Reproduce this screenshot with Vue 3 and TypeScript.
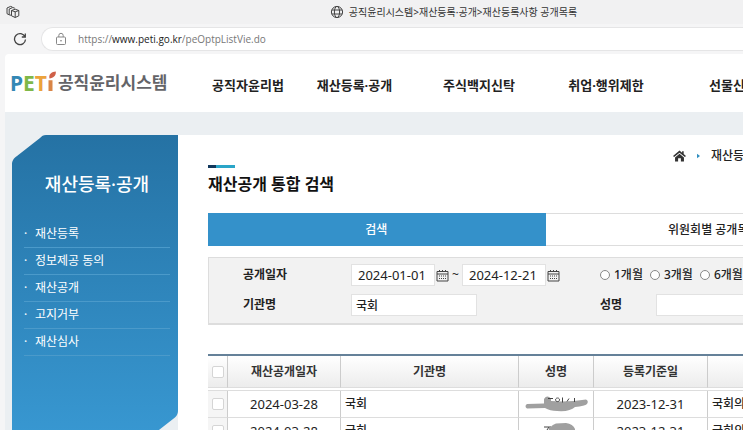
<script setup lang="ts">
import { ref } from 'vue'

interface Row {
  opened: string
  org: string
  base: string
  note: string
}

const navItems: string[] = ['공직자윤리법', '재산등록·공개', '주식백지신탁', '취업·행위제한', '선물신고']
const sideItems: string[] = ['재산등록', '정보제공 동의', '재산공개', '고지거부', '재산심사']
const periods: string[] = ['1개월', '3개월', '6개월']
const rows: Row[] = [
  { opened: '2024-03-28', org: '국회', base: '2023-12-31', note: '국회의원' },
  { opened: '2024-03-28', org: '국회', base: '2023-12-31', note: '국회의원' },
]

const from = ref('2024-01-01')
const to = ref('2024-12-21')
const org = ref('국회')
const person = ref('')
const period = ref('')
</script>

<template>
  <div class="browser">
    <div class="titlebar">
      <svg class="workspaces" viewBox="0 0 14 14" aria-hidden="true">
        <path d="M5.500 5.500 9.200 4.200l3.600 1.300v5.300l-3.600 1.700-3.700-1.700zM5.500 5.500l3.700 1.300 3.600-1.300M9.200 6.800v5.700M3.200 9.800V4l3.600-1.500 2 .7M1 8.700V3l3.600-1.600 1.700.6M1 8.700l2.200 1.100 2 .5" />
      </svg>
      <div class="tab-title">
        <svg class="globe" viewBox="0 0 14 14" aria-hidden="true">
          <circle cx="7" cy="7" r="5.600" />
          <ellipse cx="7" cy="7" rx="2.600" ry="5.600" />
          <path d="M1.900 5h10.200M1.900 9h10.200" />
        </svg>
        <span>공직윤리시스템&gt;재산등록·공개&gt;재산등록사항 공개목록</span>
      </div>
    </div>

    <div class="toolbar">
      <button class="reload" type="button" aria-label="새로 고침">
        <svg viewBox="0 0 14 14"><path d="M12 4.800A5.500 5.500 0 1 0 12.500 7.500M12.300 1.500v3.500H8.800" /></svg>
      </button>
      <div class="address">
        <svg class="lock" viewBox="0 0 12 14" aria-hidden="true">
          <rect x="1.500" y="5" width="9" height="7.500" rx="1" />
          <path d="M3.800 5V3.500a2.200 2.200 0 0 1 4.400 0V5" />
          <circle class="dot" cx="6" cy="8.800" r=".8" />
        </svg>
        <span class="url">https://<b>www.peti.go.kr</b>/peOptpListVie.do</span>
      </div>
    </div>

    <div class="page">
      <header class="site-header">
        <a class="logo" href="#" aria-label="PETI 공직윤리시스템">
          <span class="mark"><span class="p">P</span><span class="e">E</span><span class="t">T</span><svg class="i" viewBox="0 0 9 20" aria-hidden="true"><path d="M1.500 9.300h4V20h-4z" /><path class="leaf" d="M2.500 7.600C1.500 3.500 4 .8 8.800.4 9.300 4.500 6.500 7 2.500 7.600z" /></svg></span>
          <span class="logo-name">공직윤리시스템</span>
        </a>
        <nav class="gnb">
          <a v-for="item in navItems" :key="item" href="#">{{ item }}</a>
        </nav>
      </header>

      <div class="body">
        <aside class="side">
          <svg class="corner top" viewBox="0 0 34 30" aria-hidden="true"><path d="M0 0h34C31 0 30 1 28 3L5 21C1 24 0 26 0 30z" /></svg>
          <h2>재산등록·공개</h2>
          <ul>
            <li v-for="item in sideItems" :key="item"><a href="#">{{ item }}</a></li>
          </ul>
          <svg class="corner bottom" viewBox="0 0 34 30" aria-hidden="true"><path d="M34 30H0c3 0 4-1 6-3L29 9c4-3 5-5 5-9z" /></svg>
        </aside>

        <main class="content">
          <div class="heading">
            <h1>재산공개 통합 검색</h1>
            <div class="crumbs">
              <a href="#" aria-label="홈">
                <svg class="home" viewBox="0 0 14 12"><path d="M7 0 0 6l1.200 1.200L7 2.500l5.800 4.700L14 6l-2.500-2.100V.8H9.800v1.600zM7 3.600 2.200 7.500V12H5.500V8.500h3V12h3.300V7.500z" /></svg>
              </a>
              <svg class="arrow" viewBox="0 0 4 6" aria-hidden="true"><path d="M0 0l4 3-4 3z" /></svg>
              <a href="#">재산등록·공개</a>
            </div>
          </div>

          <div class="tabs">
            <button class="active" type="button">검색</button>
            <button type="button">위원회별 공개목록</button>
          </div>

          <form class="search" @submit.prevent>
            <div class="line">
              <label class="name" for="from">공개일자</label>
              <div class="fields">
                <input id="from" v-model="from" class="date" type="text" />
                <button class="cal" type="button" aria-label="시작일 선택">
                  <svg viewBox="0 0 13 13"><path d="M1 2.500h11v9.500H1zM1 5h11M3.500 1v2M6.500 1v2M9.500 1v2" /><path class="days" d="M3 7h7M3 9.500h7" /></svg>
                </button>
                <span class="tilde">~</span>
                <input id="to" v-model="to" class="date" type="text" aria-label="종료일" />
                <button class="cal" type="button" aria-label="종료일 선택">
                  <svg viewBox="0 0 13 13"><path d="M1 2.500h11v9.500H1zM1 5h11M3.500 1v2M6.500 1v2M9.500 1v2" /><path class="days" d="M3 7h7M3 9.500h7" /></svg>
                </button>
              </div>
              <div class="periods">
                <label v-for="p in periods" :key="p"><input v-model="period" type="radio" name="period" :value="p" />{{ p }}</label>
              </div>
            </div>
            <div class="line">
              <label class="name" for="org">기관명</label>
              <div class="fields"><input id="org" v-model="org" class="org" type="text" /></div>
              <div class="person">
                <label for="person">성명</label>
                <input id="person" v-model="person" type="text" />
              </div>
            </div>
          </form>

          <table class="grid">
            <colgroup>
              <col class="c-check" /><col class="c-date" /><col class="c-org" /><col class="c-name" /><col class="c-base" /><col />
            </colgroup>
            <thead>
              <tr>
                <th><input type="checkbox" aria-label="전체 선택" /></th>
                <th>재산공개일자</th>
                <th>기관명</th>
                <th>성명</th>
                <th>등록기준일</th>
                <th></th>
              </tr>
            </thead>
            <tbody>
              <tr class="spacer"><td colspan="6"></td></tr>
              <tr v-for="(row, i) in rows" :key="i">
                <td class="check"><input type="checkbox" aria-label="행 선택" /></td>
                <td class="num">{{ row.opened }}</td>
                <td class="text">{{ row.org }}</td>
                <td class="masked">
                  <svg v-if="i === 0" viewBox="0 0 64 18" aria-hidden="true">
                    <path class="smudge" d="M3 9Q0 11 3 13.500l18-.5q5 3 12 3 13 1 18-4 10-1 12-3 2-3-1-4.500L50 6l-12 .5L27 6V3.500q-4-4-7 .5v4.500z" />
                    <path class="trace" d="M24 3.500h5M33.500 3a2 1.800 0 1 0 .1 0M38.500 2.500v5M45 3.500l-2 3M50.500 3v4" />
                  </svg>
                  <svg v-else viewBox="0 0 64 18" aria-hidden="true">
                    <path class="trace" d="M20 5h5l-4 6M26 4v5" />
                    <path class="smudge" d="M24 9q3-6 8-7.500L42 1q7 1 9 6v11H24z" />
                  </svg>
                </td>
                <td class="num">{{ row.base }}</td>
                <td class="text">{{ row.note }}</td>
              </tr>
            </tbody>
          </table>
        </main>
      </div>
    </div>
  </div>
</template>

<style>
body {
  margin: 0;
  overflow: hidden;
}
</style>

<style scoped>
* {
  box-sizing: border-box;
}

.browser {
  height: 100vh;
  overflow: hidden;
  background: #f5f5f6;
  color: #222;
  font: 12px/18px "Noto Sans", "Noto Sans CJK KR", sans-serif;
}

a {
  color: inherit;
  text-decoration: none;
}

button,
input {
  margin: 0;
  padding: 0;
  font: inherit;
  color: inherit;
}

button {
  border: 0;
  background: none;
}

svg {
  display: block;
  fill: none;
  stroke: #444;
}

.titlebar {
  display: flex;
  align-items: center;
  height: 24px;
  padding-left: 6px;
  background: #f1f1f2;
}

.workspaces {
  width: 14px;
  height: 14px;
}

.tab-title {
  flex: 1;
  display: flex;
  align-items: center;
  justify-content: center;
  gap: 5px;
  padding-left: 144px;
  font-size: 10px;
  color: #333;
  white-space: nowrap;
}

.globe {
  width: 14px;
  height: 14px;
}

.toolbar {
  display: flex;
  align-items: center;
  gap: 14px;
  height: 30px;
  padding-left: 13px;
}

.reload svg {
  width: 14px;
  height: 14px;
  stroke-width: 1.3;
}

.address {
  flex: 1;
  display: flex;
  align-items: center;
  gap: 11px;
  height: 24px;
  padding-left: 13px;
  border: 1px solid #e5e5e6;
  border-right: 0;
  border-radius: 12px 0 0 12px;
  background: #fff;
}

.lock {
  width: 12px;
  height: 14px;
  stroke: #888;
}

.lock .dot {
  fill: #777;
  stroke: none;
}

.url {
  font-family: "Open Sans", sans-serif;
  font-size: 10px;
  color: #777;
}

.url b {
  font-weight: 500;
  color: #222;
}

.page {
  margin-left: 5px;
  border-radius: 4px 0 0 0;
  background: #fff;
  overflow: hidden;
}

.site-header {
  display: flex;
  align-items: center;
  height: 58px;
}

.logo {
  flex: none;
  display: flex;
  align-items: center;
  gap: 2px;
  width: 199px;
  padding-left: 5px;
}

.mark {
  display: flex;
  align-items: flex-start;
  font: bold 21px/24px "Noto Sans", sans-serif;
}

.p { color: #3488b5; }
.e { color: #7fb848; }
.t { color: #eca33c; }

.i {
  width: 9px;
  height: 20px;
  fill: #d98546;
  stroke: none;
}

.leaf {
  fill: #cf6048;
}

.logo-name {
  font-size: 17px;
  font-weight: 700;
  line-height: 24px;
  color: #646468;
  white-space: nowrap;
}

.gnb {
  flex: none;
  display: grid;
  grid-template-columns: 88px 125px 124px 130px 124px;
  padding-top: 4px;
  font-size: 13px;
  font-weight: 700;
  line-height: 20px;
  text-align: center;
  white-space: nowrap;
}

.body {
  display: flex;
  align-items: flex-start;
  padding: 23px 0 0 7px;
  background: linear-gradient(#ebeff2, #ebeff2) 0 0 / 100% 23px no-repeat,
    linear-gradient(#ebeff2, #ebeff2) 0 0 / 173px 100% no-repeat;
}

.side {
  position: relative;
  flex: none;
  width: 166px;
  padding: 36px 8px 84px 12px;
  background: linear-gradient(#2572a4, #3898d2);
  color: #fff;
}

.corner {
  position: absolute;
  width: 34px;
  height: 30px;
  fill: #ebeff2;
  stroke: none;
}

.corner.top {
  top: 0;
  left: 0;
}

.corner.bottom {
  right: 0;
  bottom: 0;
}

.side h2 {
  margin: 0 0 24px;
  font-size: 18px;
  font-weight: 500;
  line-height: 26px;
  text-align: center;
}

.side ul {
  margin: 0;
  padding: 0;
  list-style: none;
}

.side li {
  height: 27px;
  border-bottom: 1px solid #4b9aca;
  line-height: 26px;
}

.side li::before {
  content: "·";
  display: inline-block;
  width: 11px;
}

.content {
  flex: 1 0 675px;
  padding: 12px 0 0 30px;
}

.content > * {
  min-width: 675px;
}

.heading {
  display: grid;
  grid-template-columns: 1fr 210px;
  align-items: start;
  height: 66px;
}

.heading h1 {
  margin: 18px 0 0;
  font-size: 16px;
  font-weight: 700;
  line-height: 24px;
  color: #111;
}

.heading h1::before {
  content: "";
  display: block;
  width: 27px;
  height: 3px;
  margin-bottom: 4px;
  background: linear-gradient(90deg, #12385c 8px, #2aa5c8 8px);
}

.crumbs {
  display: flex;
  align-items: center;
  gap: 11px;
  font-weight: 500;
}

.home {
  width: 13px;
  height: 12px;
  fill: #333;
  stroke: none;
}

.arrow {
  width: 3px;
  height: 6px;
  fill: #318fc0;
  stroke: none;
}

.tabs {
  display: grid;
  grid-template-columns: 1fr 1fr;
  height: 33px;
}

.tabs button {
  border: 1px solid #ddd;
  border-left: 0;
  font-weight: 500;
}

.tabs .active {
  border-color: #3491ca;
  background: #3491ca;
  color: #fff;
}

.search {
  display: grid;
  gap: 8px;
  margin-top: 11px;
  padding: 6px 0 7px 34px;
  border: 1px solid #ddd;
  border-bottom-width: 2px;
  background: #f2f2f2;
}

.line {
  display: grid;
  grid-template-columns: 108px 249px 1fr;
  align-items: center;
}

.name,
.person label {
  font-weight: 700;
}

.fields,
.periods,
.person {
  display: flex;
  align-items: center;
}

.search input[type="text"] {
  width: 126px;
  height: 22px;
  padding: 0 4px;
  border: 1px solid #e2e2e2;
  background: #fff;
  font-weight: 500;
}

.search input.date {
  width: 84px;
  padding-left: 6px;
  font: 13px/20px "Noto Sans", sans-serif;
}

.cal {
  margin-left: 1px;
}

.cal svg {
  width: 13px;
  height: 13px;
}

.cal .days {
  stroke-dasharray: 1 1;
}

.tilde {
  width: 13px;
  text-align: center;
}

.periods {
  gap: 7px;
}

.periods label {
  display: flex;
  align-items: center;
  gap: 4px;
  font-weight: 500;
}

input[type="radio"],
input[type="checkbox"] {
  appearance: none;
  display: block;
  flex: none;
  border: 1px solid #888;
  background: #fff;
}

input[type="radio"] {
  width: 10px;
  height: 10px;
  border-radius: 50%;
}

input[type="radio"]:checked {
  background: #3491ca;
}

.person {
  gap: 34px;
}

.grid {
  width: 100%;
  margin-top: 29px;
  border-top: 2px solid #658199;
  border-collapse: separate;
  border-spacing: 0;
  table-layout: fixed;
}

.c-check { width: 20px; }
.c-date { width: 113px; }
.c-org { width: 178px; }
.c-name { width: 75px; }
.c-base { width: 114px; }

th,
td {
  padding: 0;
  border-right: 1px solid #ccc;
  border-bottom: 1px solid #ddd;
}

th {
  height: 32px;
  background: linear-gradient(#fff, #ececec);
  font-weight: 700;
  color: #333;
}

td {
  height: 27px;
}

.spacer td {
  height: 3px;
}

.check {
  background: #f5f5f5;
}

.grid input[type="checkbox"] {
  width: 12px;
  height: 12px;
  margin: 0 auto;
  border-color: #d5d5d5;
  border-radius: 2px;
}

.num {
  font: 13px/18px "Noto Sans", sans-serif;
  text-align: center;
}

.text {
  padding-left: 4px;
  font-weight: 500;
}

.masked svg {
  width: 64px;
  height: 18px;
  margin: 0 auto;
}

.smudge {
  fill: #a0a0a0;
  stroke: none;
}
</style>
